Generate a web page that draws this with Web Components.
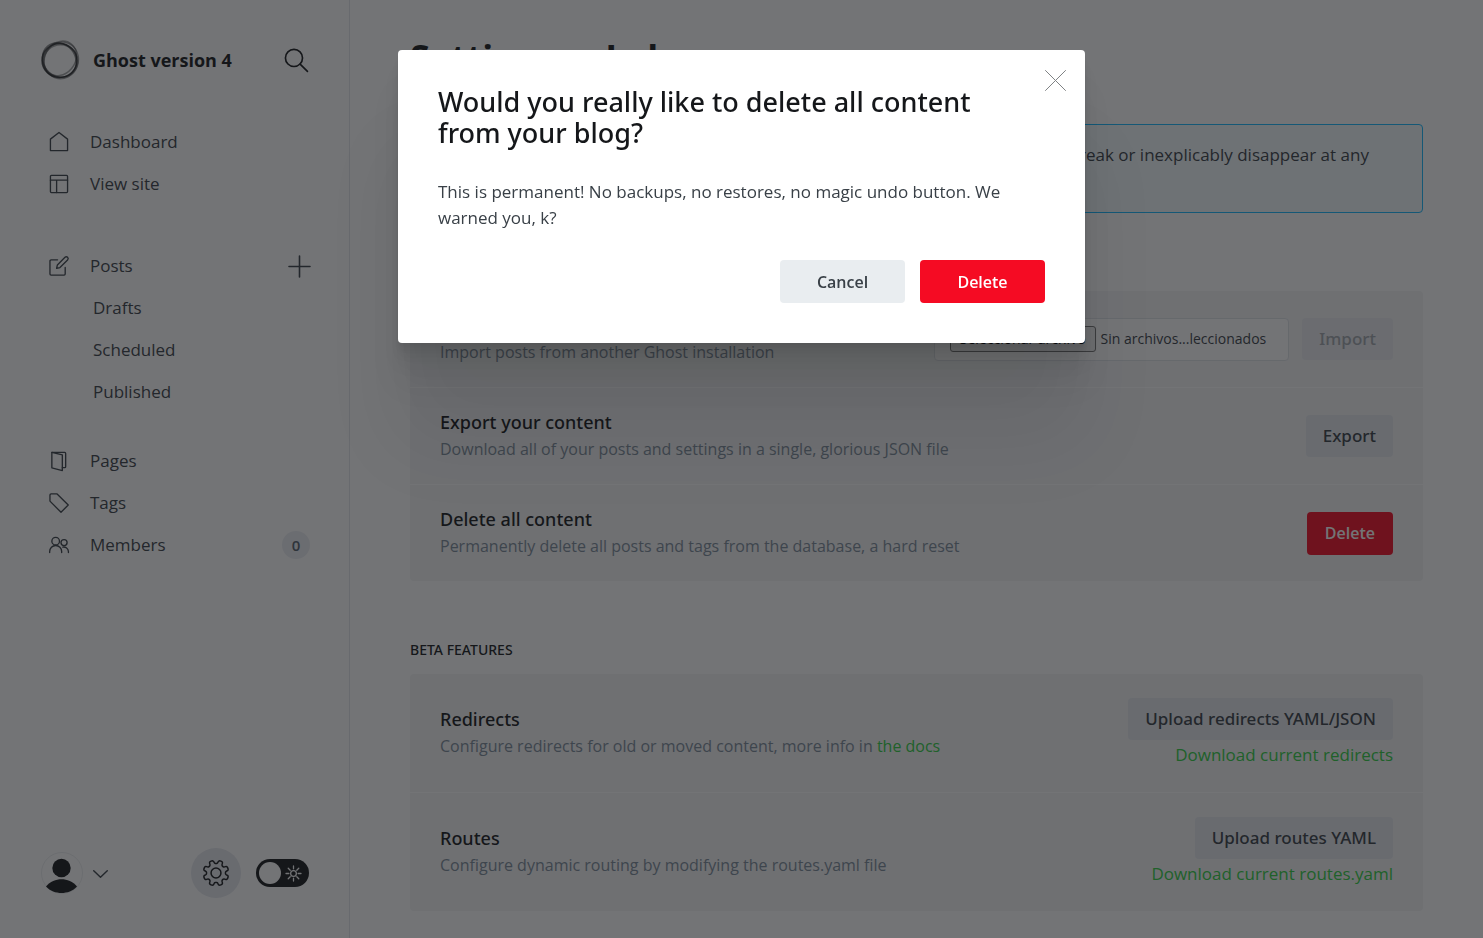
<!DOCTYPE html>
<html lang="en">
<head>
<meta charset="utf-8">
<meta name="viewport" content="width=device-width, initial-scale=1">
<title>Settings - Labs</title>
<style>
  :root {
    --black: #15171a;
    --darkgrey: #394047;
    --midgrey: #7c8b9a;
    --panel: #f4f5f6;
    --button: #e6e9ee;
    --green: #30cf43;
    --red: #f50b23;
    --blue: #14b8ff;
    --medium: "Noto Sans", "Open Sans", sans-serif;
  }
  body {
    margin: 0;
    background: #fff;
    color: var(--darkgrey);
    font: 17px/26px "Open Sans", "Noto Sans", sans-serif;
  }
</style>
</head>
<body>
<gh-app></gh-app>

<script>
const define = (name, html, setup) => {
  const template = document.createElement('template');
  template.innerHTML = html;
  customElements.define(name, class extends HTMLElement {
    constructor() {
      super();
      this.attachShadow({ mode: 'open' }).append(template.content.cloneNode(true));
    }
    connectedCallback() {
      if (setup) setup(this, this.shadowRoot);
    }
  });
};

// Eight rounded teeth, smoothed with quadratic curves between edge midpoints.
const gearPath = () => {
  const points = [];
  for (let tooth = 0; tooth < 8; tooth++) {
    const base = tooth * 45 + 22.5;
    for (const [angle, radius] of [[-22.5, 7.6], [-13, 7.9], [-10, 10.5], [10, 10.5], [13, 7.9]]) {
      const a = (base + angle) * Math.PI / 180;
      points.push([10.5 + radius * Math.sin(a), 10.5 - radius * Math.cos(a)]);
    }
  }
  const mid = (p, q) => [(p[0] + q[0]) / 2, (p[1] + q[1]) / 2].map(n => n.toFixed(2)).join(' ');
  let d = 'M' + mid(points[points.length - 1], points[0]);
  points.forEach((p, i) => {
    d += `Q${p[0].toFixed(2)} ${p[1].toFixed(2)} ${mid(p, points[(i + 1) % points.length])}`;
  });
  return d + 'z';
};

const icons = {
  home: '<path d="M1.5 7.5v12h18v-12l-9-7z"/>',
  layout: '<rect x="1.5" y="1.5" width="18" height="18" rx="1"/><path d="M1.5 6.5h18M8 6.5v13"/>',
  edit: '<path d="M9 4H2.2a1.2 1.2 0 0 0-1.2 1.2v13.6A1.2 1.2 0 0 0 2.2 20h13.6a1.2 1.2 0 0 0 1.2-1.2V12"/><path d="M8 13l.8-3.6 8-8a1.9 1.9 0 0 1 2.7 2.7l-8 8z"/>',
  pages: '<path d="M3 1.5l11 2.6v16.4L3 17.7z"/><path d="M3 1.5h13.5a1 1 0 0 1 1 1v14a1 1 0 0 1-1 1H14"/>',
  tag: '<path d="M1 2.2A1.2 1.2 0 0 1 2.2 1H8.5l11.7 11.6-7.6 7.6L1 8.5z"/>',
  members: '<circle cx="7" cy="6.5" r="4"/><path d="M.7 18.5v-1.2a6.3 6.3 0 0 1 12.6 0v1.2"/><circle cx="15.8" cy="8" r="3.2"/><path d="M14.5 12.7a5 5 0 0 1 5.9 4.6v1.2"/>',
  plus: '<path d="M10.5 0v21M0 10.5h21"/>',
  search: '<circle cx="8.2" cy="8.2" r="7.8"/><path d="M13.8 13.8l6.7 6.7"/>',
  chevron: '<path d="M1 6.5l9.5 9.2L20 6.5"/>',
  close: '<path d="M.5.5l20 20M20.5.5l-20 20"/>',
  gear: `<circle cx="10.5" cy="10.5" r="4"/><path d="${gearPath()}"/>`,
  sun: '<circle cx="10.5" cy="10.5" r="4"/><path d="M10.5 0v4M10.5 17v4M0 10.5h4M17 10.5h4M3.1 3.1l2.8 2.8M15.1 15.1l2.8 2.8M3.1 17.9l2.8-2.8M15.1 5.9l2.8-2.8"/>'
};

define('gh-icon', `
  <style>
    :host { display: block; flex: none; width: 20px; height: 20px; }
    svg { display: block; width: 100%; height: 100%; overflow: visible; fill: none;
      stroke: currentColor; stroke-width: var(--stroke, 1.4); stroke-linecap: round; stroke-linejoin: round; }
  </style>
  <svg viewBox="0 0 21 21" aria-hidden="true"></svg>`,
  (el, root) => { root.querySelector('svg').innerHTML = icons[el.getAttribute('name')]; });

define('gh-logo', `
  <style>
    :host { display: block; flex: none; width: 38px; height: 38px; }
    svg { display: block; width: 100%; height: 100%; overflow: visible; fill: none; stroke: var(--black); }
  </style>
  <svg viewBox="0 0 38 38" role="img" aria-label="Site logo">
    <ellipse cx="18.5" cy="19.5" rx="17.5" ry="17" stroke-width="1.5" opacity=".7"/>
    <ellipse cx="19.5" cy="20" rx="17" ry="16.5" stroke-width="2" opacity=".4"/>
    <ellipse cx="20" cy="17.8" rx="18.5" ry="15.5" stroke-width="1.5" opacity=".4" transform="rotate(-50 19 19)"/>
    <ellipse cx="18.5" cy="19.5" rx="18" ry="16" stroke-width="1.5" opacity=".5" transform="rotate(50 19 19)"/>
    <ellipse cx="20.5" cy="19" rx="17" ry="18.5" stroke-width="1.2" opacity=".4" transform="rotate(20 19 19)"/>
  </svg>`);

define('gh-nav-item', `
  <style>
    :host { display: flex; align-items: center; height: 42px; }
    a { display: flex; align-items: center; flex: 1; gap: 21px; color: var(--darkgrey); text-decoration: none; }
    :host([sub]) a { padding-left: 44px; }
  </style>
  <a href="#"><gh-icon></gh-icon><span><slot></slot></span></a>
  <slot name="end"></slot>`,
  (el, root) => {
    const icon = root.querySelector('gh-icon');
    if (el.hasAttribute('icon')) {
      const next = document.createElement('gh-icon');
      next.setAttribute('name', el.getAttribute('icon'));
      icon.replaceWith(next);
    } else icon.remove();
  });

define('gh-sidebar', `
  <style>
    :host { display: flex; flex-direction: column; box-sizing: border-box; width: 350px; height: 100vh;
      position: sticky; top: 0; padding: 0 39px 0 41px; border-right: 1px solid #e3e6ea; }
    button { border: 0; padding: 0; background: none; color: inherit; font: inherit; cursor: pointer; }
    header { display: flex; align-items: center; height: 120px; gap: 14px; flex: none; margin-bottom: 1px; }
    header strong { flex: 1; color: var(--black); font-size: 18px; font-weight: 700; }
    .search { color: var(--black); padding-right: 2px; }
    .search gh-icon { width: 23px; height: 23px; --stroke: 1.5; }
    nav { display: flex; flex-direction: column; padding-left: 8px; }
    .posts { margin: 40px 0 27px; }
    .add gh-icon { width: 21px; height: 21px; --stroke: 1.6; }
    .count { width: 28px; height: 28px; border-radius: 50%; background: #eceef3; font-size: 15px; line-height: 28px;
      font-weight: 600; text-align: center; color: #54606b; }
    footer { display: flex; align-items: center; margin-top: auto; height: 130px; flex: none; }
    .user { display: flex; align-items: center; gap: 10px; }
    .user svg { width: 42px; height: 42px; display: block; }
    .user gh-icon { width: 15px; height: 15px; --stroke: 2; }
    .gear { display: grid; place-items: center; width: 50px; height: 50px; margin: 0 15px 0 auto;
      border-radius: 50%; background: #e6e8ee; color: var(--black); }
    .gear gh-icon { width: 26px; height: 26px; --stroke: 1.2; }
    .toggle { display: flex; align-items: center; box-sizing: border-box; width: 53px; height: 28px; padding: 3px 8px 3px 3px;
      border-radius: 14px; background: var(--black); color: #fff; position: relative; justify-content: space-between; margin-right: 1px; }
    .toggle input { position: absolute; inset: 0; width: 100%; height: 100%; margin: 0; opacity: 0; }
    .knob { width: 22px; height: 22px; border-radius: 50%; background: #fff; }
    .toggle gh-icon { width: 15px; height: 15px; --stroke: 1.8; }
  </style>
  <header>
    <gh-logo></gh-logo>
    <strong>Ghost version 4</strong>
    <button class="search" aria-label="Search site"><gh-icon name="search"></gh-icon></button>
  </header>
  <nav>
    <gh-nav-item icon="home">Dashboard</gh-nav-item>
    <gh-nav-item icon="layout">View site</gh-nav-item>
  </nav>
  <nav class="posts">
    <gh-nav-item icon="edit">Posts<button slot="end" class="add" aria-label="New post"><gh-icon name="plus"></gh-icon></button></gh-nav-item>
    <gh-nav-item sub>Drafts</gh-nav-item>
    <gh-nav-item sub>Scheduled</gh-nav-item>
    <gh-nav-item sub>Published</gh-nav-item>
  </nav>
  <nav>
    <gh-nav-item icon="pages">Pages</gh-nav-item>
    <gh-nav-item icon="tag">Tags</gh-nav-item>
    <gh-nav-item icon="members">Members<span slot="end" class="count">0</span></gh-nav-item>
  </nav>
  <footer>
    <button class="user" aria-label="Account menu">
      <svg viewBox="0 0 42 42" aria-hidden="true">
        <circle cx="21" cy="21" r="20.5" fill="#fff" stroke="#eceef0"/>
        <circle cx="20.5" cy="16" r="9.2" fill="#15171a"/>
        <path d="M5 34.5C9 29.5 15 27.2 20.5 27.2S32 29.5 36 34.5C32 39 26 41 20.5 41S9 39 5 34.5z" fill="#15171a"/>
      </svg>
      <gh-icon name="chevron"></gh-icon>
    </button>
    <button class="gear" aria-label="Settings"><gh-icon name="gear"></gh-icon></button>
    <label class="toggle"><input type="checkbox" aria-label="Night shift"><span class="knob"></span><gh-icon name="sun"></gh-icon></label>
  </footer>`);

define('gh-button', `
  <style>
    :host { display: block; }
    button { display: block; box-sizing: border-box; width: 100%; height: 42px; padding: 0 17px; border: 0; border-radius: 4px;
      background: var(--button); color: var(--darkgrey); font: 500 17px/26px var(--medium); white-space: nowrap; cursor: pointer; }
    :host([tall]) button { height: 43px; padding: 0 18px; font: inherit; font-size: 16px; font-weight: 600; }
    button:disabled { color: #a1a6ac; background: #eaecf0; }
    :host([red]) button { background: var(--red); color: #fff; }
    :host([light]) button { background: #e9edf0; }
  </style>
  <button type="button"><slot></slot></button>`,
  (el, root) => { root.querySelector('button').disabled = el.hasAttribute('disabled'); });

define('gh-file', `
  <style>
    :host { display: block; }
    label { display: flex; align-items: center; gap: 5px; position: relative; box-sizing: border-box; height: 43px; padding: 0 22px 0 15px;
      border: 1px solid #dfe3e7; border-radius: 4px; background: #fff; color: var(--darkgrey); font-size: 14px; line-height: 20px; white-space: nowrap; }
    input { position: absolute; inset: 0; width: 100%; height: 100%; opacity: 0; }
    .choose { box-sizing: border-box; padding: 2px 9px; border: 1px solid #767676; border-radius: 3px; background: #efefef; color: #000; }
  </style>
  <label><input type="file" aria-label="Seleccionar archivo"><span class="choose">Seleccionar archivo</span><span>Sin archivos...leccionados</span></label>`);

define('gh-section', `
  <style>
    :host { display: block; margin-top: 59px; }
    h2 { margin: 0 0 14px; color: var(--black); font: 500 14px/20px var(--medium); text-transform: uppercase; }
    .panel { border-radius: 4px; background: var(--panel); }
  </style>
  <h2></h2>
  <div class="panel"><slot></slot></div>`,
  (el, root) => { root.querySelector('h2').textContent = el.getAttribute('heading'); });

define('gh-row', `
  <style>
    :host { display: flex; align-items: center; justify-content: space-between; gap: 30px; padding: 24px 30px; border-bottom: 1px solid #fff; }
    :host(:last-child) { border-bottom: 0; }
    h3 { margin: 0 0 2px; color: var(--black); font: 500 18px/24px var(--medium); }
    p { margin: 0; color: var(--midgrey); font-size: 16px; line-height: 26px; }
    .text { margin: -2px 0; }
    .actions { display: flex; flex: none; align-items: center; gap: 13px; margin: -4px 0; }
    :host([stack]) .actions { flex-direction: column; align-items: flex-end; gap: 2px; margin: 0; }
  </style>
  <div class="text"><h3></h3><p><slot name="text"></slot></p></div>
  <div class="actions"><slot></slot></div>`,
  (el, root) => { root.querySelector('h3').textContent = el.getAttribute('heading'); });

define('gh-labs', `
  <style>
    :host { display: block; flex: 1; min-width: 0; box-sizing: border-box; padding: 0 60px 24px; }
    header { display: flex; align-items: center; height: 116px; margin-bottom: 8px; }
    h1 { display: flex; align-items: center; gap: 17px; margin: 0; color: var(--black); font-size: 36px; line-height: 44px; font-weight: 700; }
    h1 gh-icon { width: 16px; height: 16px; transform: rotate(-90deg); }
    .notice { box-sizing: border-box; padding: 17px 30px 18px 53px; border: 1px solid var(--blue); border-radius: 4px; background: #f3fafd; color: var(--darkgrey); margin: 0; }
    .first { margin-top: 44px; }
    a { color: var(--green); text-decoration: none; }
  </style>
  <header><h1><span>Settings</span><gh-icon name="chevron"></gh-icon><span>Labs</span></h1></header>
  <p class="notice">This is a testing ground for new or experimental features. They may change, break or inexplicably disappear at any time.</p>
  <gh-section class="first" heading="Migration options">
    <gh-row heading="Import content"><span slot="text">Import posts from another Ghost installation</span>
      <gh-file></gh-file><gh-button disabled>Import</gh-button></gh-row>
    <gh-row heading="Export your content"><span slot="text">Download all of your posts and settings in a single, glorious JSON file</span>
      <gh-button>Export</gh-button></gh-row>
    <gh-row heading="Delete all content"><span slot="text">Permanently delete all posts and tags from the database, a hard reset</span>
      <gh-button red tall>Delete</gh-button></gh-row>
  </gh-section>
  <gh-section heading="Beta features">
    <gh-row stack heading="Redirects"><span slot="text">Configure redirects for old or moved content, more info in <a href="#">the docs</a></span>
      <gh-button>Upload redirects YAML/JSON</gh-button><a href="#">Download current redirects</a></gh-row>
    <gh-row stack heading="Routes"><span slot="text">Configure dynamic routing by modifying the routes.yaml file</span>
      <gh-button>Upload routes YAML</gh-button><a href="#">Download current routes.yaml</a></gh-row>
  </gh-section>`);

define('gh-modal', `
  <style>
    :host { display: flex; position: fixed; inset: 0; z-index: 10; align-items: flex-start; justify-content: center; padding: 50px 20px; background: rgba(21, 23, 26, .6); }
    section { position: relative; box-sizing: border-box; width: 100%; max-width: 687px; padding: 36px 40px 40px; border-radius: 4px; background: #fff;
      box-shadow: 0 3px 2px rgba(0,0,0,.02), 0 7px 5px rgba(0,0,0,.03), 0 13px 10px rgba(0,0,0,.035), 0 22px 18px rgba(0,0,0,.042), 0 42px 33px rgba(0,0,0,.05), 0 100px 80px rgba(0,0,0,.07); }
    h1 { margin: 0 0 31px; padding-right: 30px; color: var(--black); font: 500 27px/31px var(--medium); }
    p { margin: 0 0 29px; }
    footer { display: flex; justify-content: flex-end; gap: 15px; }
    footer gh-button { width: 125px; }
    .close { position: absolute; top: 20px; right: 19px; padding: 0; border: 0; background: none; color: #7f8284; }
    .close gh-icon { width: 21px; height: 21px; --stroke: 1; }
  </style>
  <section role="dialog" aria-modal="true" aria-labelledby="title">
    <h1 id="title">Would you really like to delete all content from your blog?</h1>
    <button class="close" aria-label="Close"><gh-icon name="close"></gh-icon></button>
    <p>This is permanent! No backups, no restores, no magic undo button. We warned you, k?</p>
    <footer><gh-button light tall>Cancel</gh-button><gh-button red tall>Delete</gh-button></footer>
  </section>`);

define('gh-app', `
  <style>
    :host { display: flex; align-items: flex-start; min-height: 100vh; }
  </style>
  <gh-sidebar></gh-sidebar>
  <gh-labs></gh-labs>
  <gh-modal></gh-modal>`);
</script>
</body>
</html>
